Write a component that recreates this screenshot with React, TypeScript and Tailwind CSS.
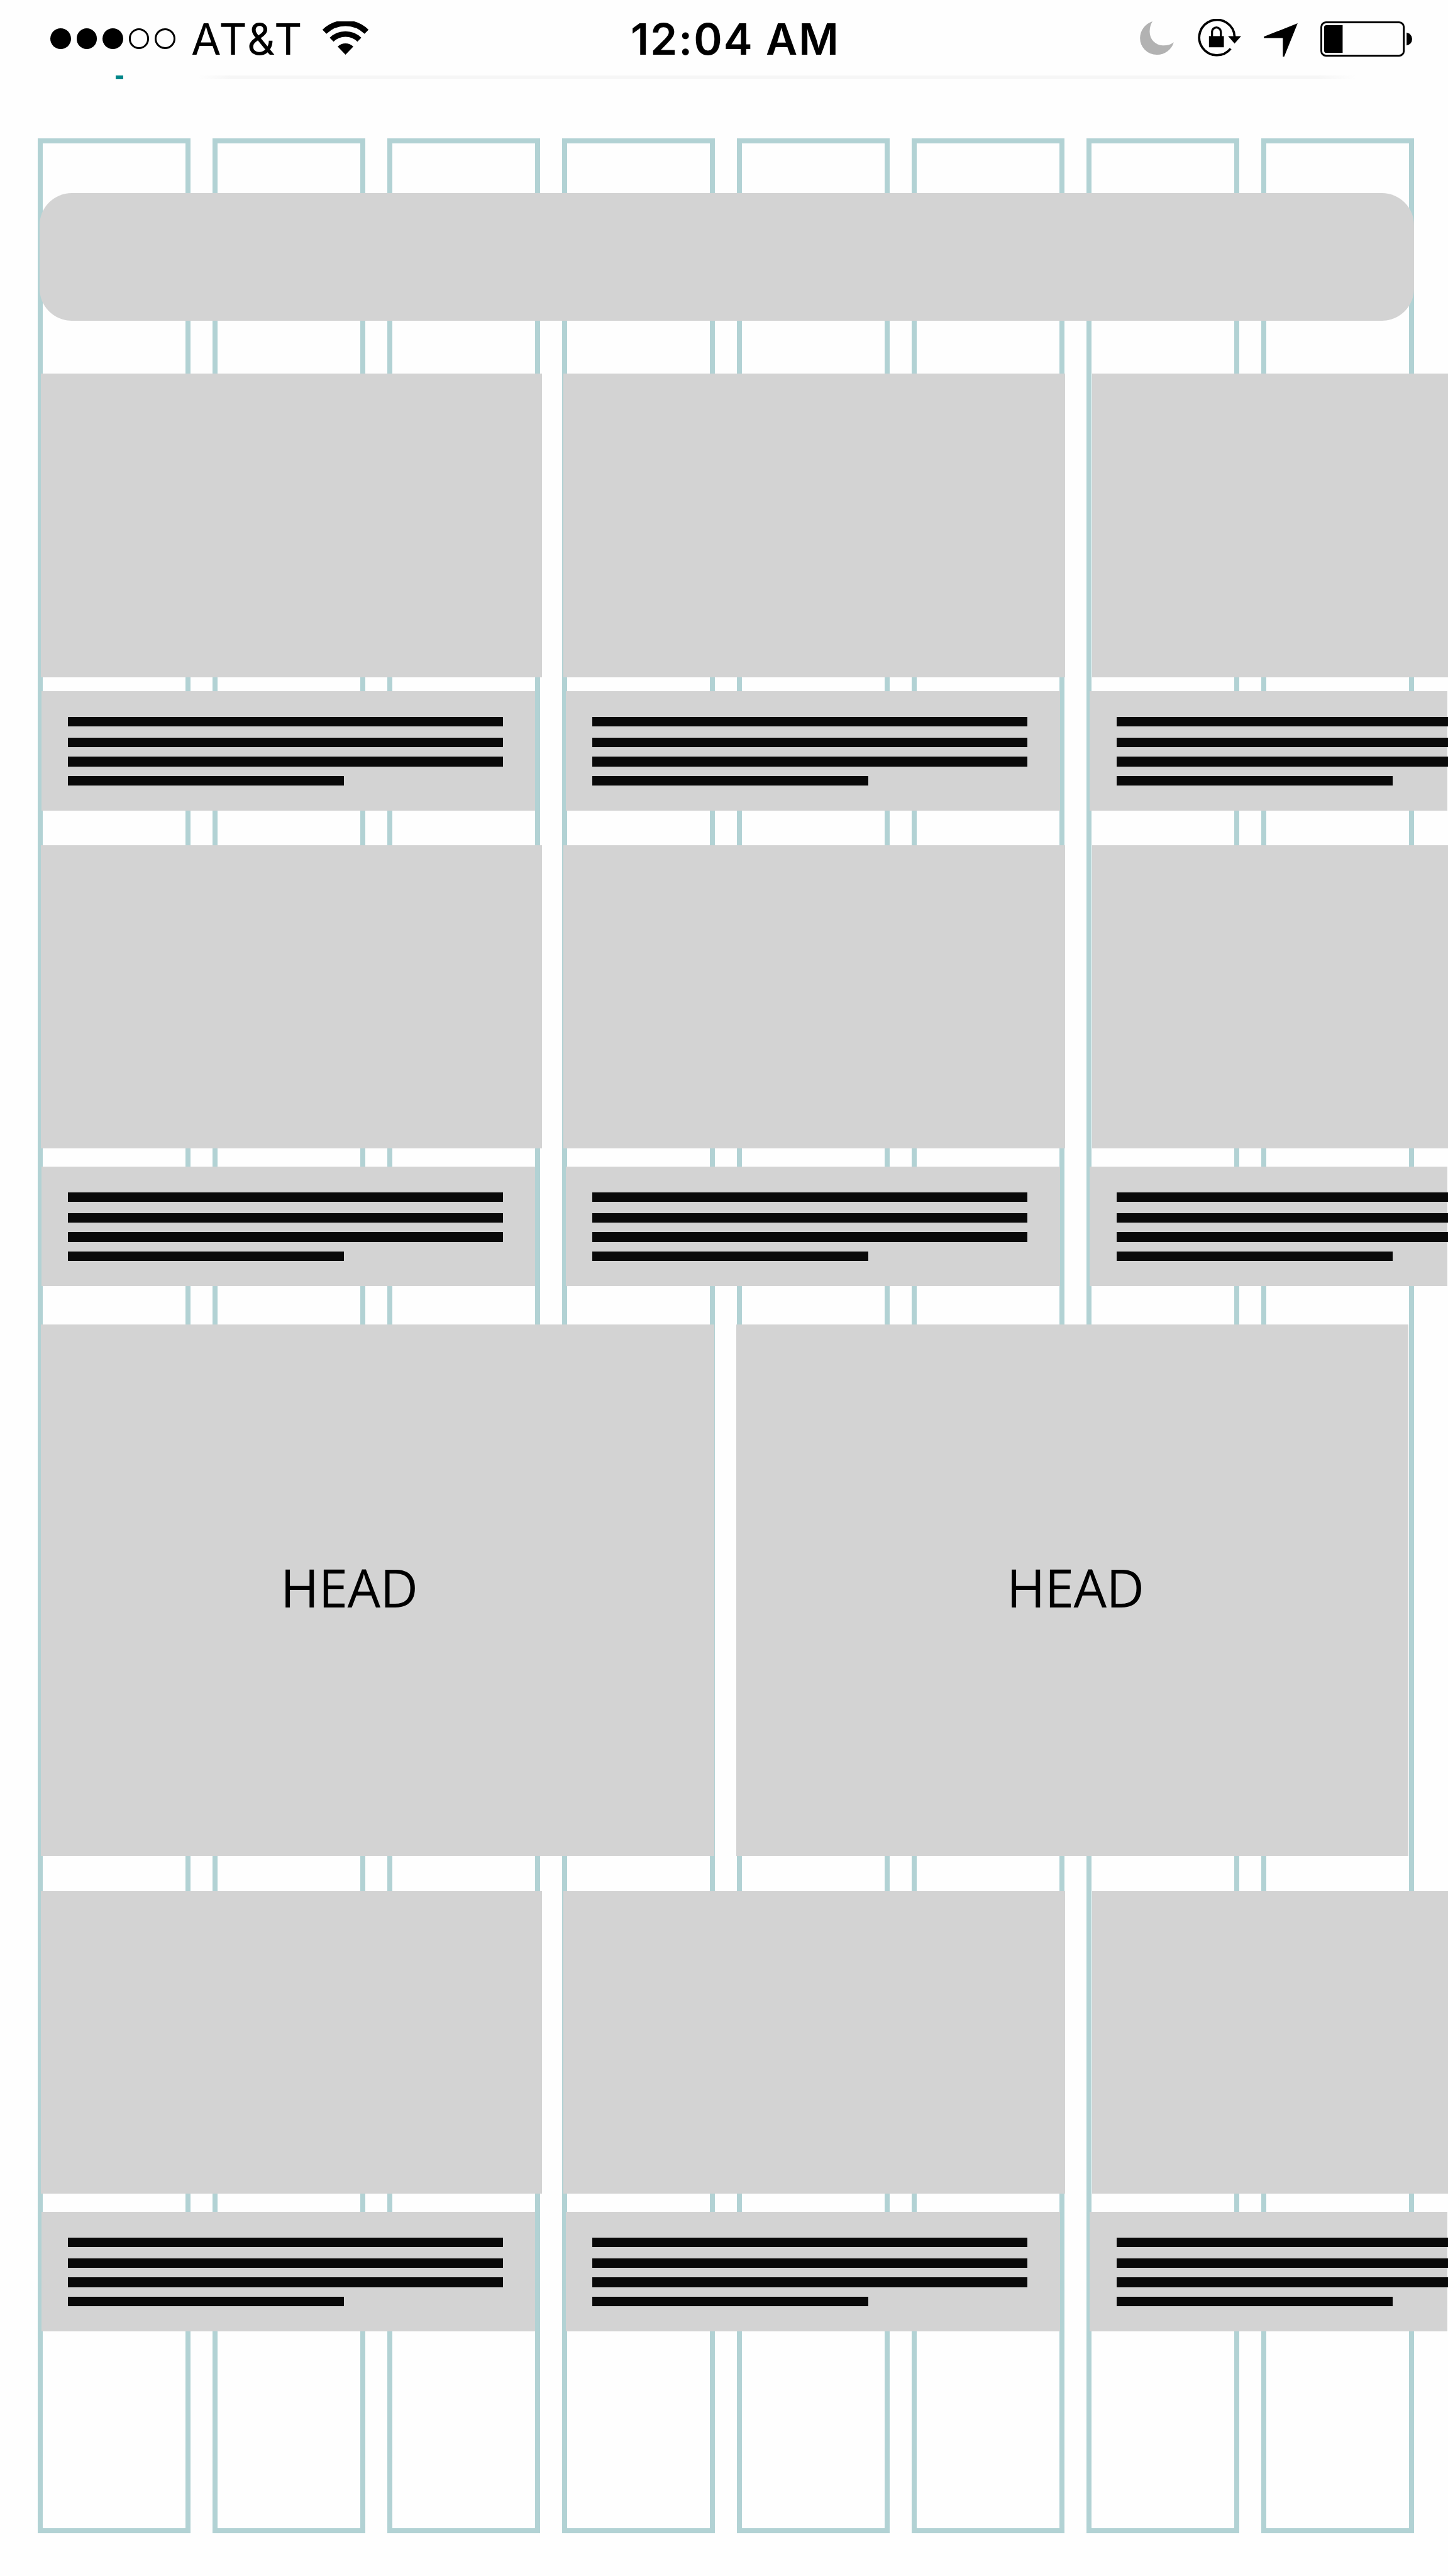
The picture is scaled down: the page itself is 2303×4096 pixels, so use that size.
const COLUMNS = [0, 1, 2, 3, 4, 5, 6, 7];

function SignalDots() {
  return (
    <div className="flex gap-[9px] pt-[45px]">
      {[true, true, true, false, false].map((on, i) => (
        <span
          key={i}
          className={
            on
              ? "size-[32.6px] rounded-full bg-black"
              : "size-[32.6px] rounded-full border-[3px] border-black"
          }
        />
      ))}
    </div>
  );
}

function WifiIcon() {
  return (
    <svg className="mt-[34px] ml-[37px] h-[53px] w-[75px]" viewBox="0 0 101 72" fill="none">
      <path d="M5 22.5A65 65 0 0 1 96 22.5" stroke="#000" strokeWidth="12.5" />
      <path d="M20.500 39.500A43 43 0 0 1 80.500 39.500" stroke="#000" strokeWidth="12" />
      <path d="M33.500 54.500A24 24 0 0 1 67.500 54.500L50.500 72Z" fill="#000" />
    </svg>
  );
}

function MoonIcon() {
  return (
    <svg className="mt-[34px] h-[53px] w-[54px]" viewBox="0 0 73 72">
      <path
        d="M27 0A39 39 0 0 0 0 36A36 36 0 0 0 36 72A38 38 0 0 0 73 45A38 38 0 0 1 49 52A29 29 0 0 1 21 23A40 40 0 0 1 27 0Z"
        fill="#b2b2b2"
      />
    </svg>
  );
}

function RotationLockIcon() {
  return (
    <svg className="mt-[30px] ml-[38px] h-[60px] w-[69px]" viewBox="0 0 93 81" fill="none">
      <path d="M79 38A38 38 0 1 0 70.500 64" stroke="#000" strokeWidth="5" />
      <path d="M65 37H93L79 53Z" fill="#000" />
      <path d="M30.500 39V28A9.500 9.500 0 0 1 49.500 28V39" stroke="#000" strokeWidth="4.500" />
      <rect x="24" y="37" width="32" height="24" fill="#000" />
    </svg>
  );
}

function LocationIcon() {
  return (
    <svg className="mt-[37px] ml-[36px] h-[53px] w-[54px]" viewBox="0 0 73 72">
      <path d="M73 0L44 72H41V32H0V29Z" fill="#000" />
    </svg>
  );
}

function BatteryIcon() {
  return (
    <svg className="mt-[34px] ml-[36px] h-[56px] w-[146px]" viewBox="0 0 198 76" fill="none">
      <rect x="2" y="2" width="178" height="72" rx="10" stroke="#000" strokeWidth="4" />
      <path d="M48 8H13Q8 8 8 13V63Q8 68 13 68H48Z" fill="#000" />
      <path d="M186 24Q198 27 198 38T186 52Z" fill="#000" />
    </svg>
  );
}

function StatusBar() {
  return (
    <header className="flex h-[120px] font-['Inter',sans-serif] text-[69px] leading-[69px] text-black">
      <div className="flex w-[1003px] pl-[80px]">
        <SignalDots />
        <span className="mt-[28px] ml-[25px] w-[171px] tracking-[2.5px] whitespace-nowrap">AT&amp;T</span>
        <WifiIcon />
      </div>
      <span className="mt-[28px] w-[810px] font-semibold tracking-[2px] whitespace-nowrap">12:04 AM</span>
      <MoonIcon />
      <RotationLockIcon />
      <LocationIcon />
      <BatteryIcon />
    </header>
  );
}

function PageEdge() {
  return (
    <div className="flex h-[6px]">
      <div className="ml-[184px] w-[12px] bg-[#008689]" />
      <div className="ml-[119px] w-[53px] bg-linear-to-r from-[#fefefe] to-[#f6f6f6]" />
      <div className="w-[1728px] bg-[#f6f6f6]" />
      <div className="w-[61px] bg-linear-to-r from-[#f6f6f6] to-[#fefefe]" />
    </div>
  );
}

function GridColumns() {
  return (
    <div className="absolute top-[220px] left-[60px] flex h-[3808px] gap-[35.36px]">
      {COLUMNS.map((c) => (
        <div key={c} className="w-[242.7px] shrink-0 border-8 border-[#b2d2d4]" />
      ))}
    </div>
  );
}

function TextLines() {
  return (
    <>
      <div className="h-[15px] w-[692px] bg-[#090909]" />
      <div className="mt-[18px] h-[15px] w-[692px] bg-[#090909]" />
      <div className="mt-[15px] h-[16px] w-[692px] bg-[#090909]" />
      <div className="mt-[15px] h-[15px] w-[439px] bg-[#090909]" />
    </>
  );
}

function CardRow({ className, images, captions }: { className: string; images: string; captions: string }) {
  return (
    <section className={className}>
      <div className={"flex pl-[65px] " + images}>
        <div className="w-[797px] shrink-0 bg-[#d3d3d3]" />
        <div className="ml-[34px] w-[798px] shrink-0 bg-[#d3d3d3]" />
        <div className="ml-[43px] grow bg-[#d3d3d3]" />
      </div>
      <div className={"flex h-[190px] pl-[66px] " + captions}>
        <div className="w-[785px] shrink-0 bg-[#d3d3d3] pt-[41px] pl-[42px]">
          <TextLines />
        </div>
        <div className="ml-[49px] w-[786px] shrink-0 bg-[#d3d3d3] pt-[41px] pl-[42px]">
          <TextLines />
        </div>
        <div className="ml-[47px] w-[569px] shrink-0 bg-[#d3d3d3] pt-[41px] pl-[43px]">
          <TextLines />
        </div>
      </div>
    </section>
  );
}

function HeadRow() {
  return (
    <section className="mt-[61px] flex h-[845px] pl-[65px] font-['Open_Sans',sans-serif] text-[83.3px] leading-[100px] tracking-[-0.6px] text-black">
      <div className="w-[1071px] bg-[#d3d3d3] pt-[368px] pl-[381px]">HEAD</div>
      <div className="ml-[35px] w-[1069px] bg-[#d3d3d3] pt-[368px] pl-[430px]">HEAD</div>
    </section>
  );
}

export default function App() {
  return (
    <div className="relative h-[4096px] w-[2303px] overflow-hidden bg-[#fefefe]">
      <GridColumns />
      <div className="relative">
        <StatusBar />
        <PageEdge />
        <div className="mt-[181px] ml-[63px] h-[203px] w-[2186px] rounded-[51px] bg-[#d3d3d3]" />
        <CardRow className="mt-[84px]" images="h-[483px]" captions="mt-[22px]" />
        <CardRow className="mt-[55px]" images="h-[482px]" captions="mt-[29px]" />
        <HeadRow />
        <CardRow className="mt-[56px]" images="h-[481px]" captions="mt-[29px]" />
      </div>
    </div>
  );
}
